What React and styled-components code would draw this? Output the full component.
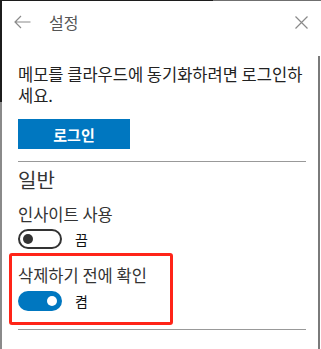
import React, { useState } from "react";
import styled, { createGlobalStyle } from "styled-components";

const GlobalStyle = createGlobalStyle`
  body {
    margin: 0;
    font-family: "Noto Sans CJK KR", "Noto Sans", sans-serif;
  }
`;

const Page = styled.div`
  width: 321px;
  height: 349px;
  overflow: hidden;
  box-sizing: border-box;
  background:
    linear-gradient(to right, #1c1c1c 213px, #6f6f6f 213px) top left / 100% 1px no-repeat,
    linear-gradient(#1c1c1c 102px, #8a8a8a 102px) top left / 2px 100% no-repeat,
    linear-gradient(transparent 56px, #7a7a7a 56px) 318px 0 / 2px 100% no-repeat,
    #ffffff;
`;

const Header = styled.div`
  height: 44px;
  display: flex;
  align-items: center;
  padding: 0 13px 0 14px;
`;

const IconButton = styled.button`
  border: none;
  background: none;
  padding: 0;
  display: flex;
  align-items: center;
  color: #8a8a8a;
  cursor: pointer;
`;

const Title = styled.h1`
  flex: 1;
  margin: 0 0 0 18px;
  font-size: 16px;
  font-weight: 400;
  color: #555;
`;

const Content = styled.div`
  padding: 0 15px 0 18px;
`;

const Message = styled.p`
  margin: 20px 0 0;
  font-size: 16.5px;
  line-height: 21px;
  color: #222;
`;

const LoginButton = styled.button`
  margin-top: 13px;
  width: 112px;
  height: 30px;
  border: none;
  background: #0077c0;
  color: #fff;
  font-family: inherit;
  font-size: 15px;
  font-weight: 700;
  display: block;
`;

const Divider = styled.hr`
  margin: ${(p) => p.$top}px 0 0;
  border: none;
  border-top: 1px solid #999;
`;

const SectionTitle = styled.h2`
  margin: 5px 0 0;
  font-size: 20px;
  line-height: 26px;
  font-weight: 400;
  color: #333;
`;

const Setting = styled.div`
  margin-top: ${(p) => p.$top}px;
`;

const SettingLabel = styled.div`
  font-size: 16.5px;
  line-height: 20px;
  color: #333;
`;

const ToggleRow = styled.div`
  display: flex;
  align-items: center;
  gap: 13px;
  margin-top: ${(p) => p.$top}px;
`;

const Track = styled.button`
  width: 44px;
  height: 20px;
  box-sizing: border-box;
  border-radius: 10px;
  border: ${(p) => (p.$on ? "none" : "2px solid #333")};
  background: ${(p) => (p.$on ? "#0077c0" : "#fff")};
  display: flex;
  align-items: center;
  justify-content: ${(p) => (p.$on ? "flex-end" : "flex-start")};
  padding: 0 ${(p) => (p.$on ? 5 : 3)}px;
  cursor: pointer;
`;

const Knob = styled.span`
  width: 10px;
  height: 10px;
  border-radius: 50%;
  background: ${(p) => (p.$on ? "#fff" : "#333")};
`;

const StateText = styled.span`
  font-size: 14px;
  color: #111;
`;

const Highlight = styled.div`
  margin: 4px 0 0 -9px;
  width: 164px;
  box-sizing: border-box;
  border: 3px solid #ff2418;
  border-radius: 3px;
  padding: 9px 0 11px 6px;
`;

const Toggle = ({ on, onChange }) => (
  <ToggleRow $top={on ? 6 : 5}>
    <Track $on={on} onClick={onChange}>
      <Knob $on={on} />
    </Track>
    <StateText>{on ? "켬" : "끔"}</StateText>
  </ToggleRow>
);

const App = () => {
  const [insights, setInsights] = useState(false);
  const [confirmDelete, setConfirmDelete] = useState(true);

  return (
    <Page>
      <GlobalStyle />
      <Header>
        <IconButton aria-label="뒤로">
          <svg width="17" height="14" viewBox="0 0 17 14" fill="none" stroke="currentColor" strokeWidth="1.2">
            <path d="M16.5 7H1M7 1L1 7l6 6" />
          </svg>
        </IconButton>
        <Title>설정</Title>
        <IconButton aria-label="닫기">
          <svg width="13" height="13" viewBox="0 0 13 13" fill="none" stroke="currentColor" strokeWidth="1.2">
            <path d="M0.5 0.5l12 12M12.5 0.5l-12 12" />
          </svg>
        </IconButton>
      </Header>
      <Content>
        <Message>메모를 클라우드에 동기화하려면 로그인하세요.</Message>
        <LoginButton>로그인</LoginButton>
        <Divider $top={12} />
        <SectionTitle>일반</SectionTitle>
        <Setting $top={11}>
          <SettingLabel>인사이트 사용</SettingLabel>
          <Toggle on={insights} onChange={() => setInsights(!insights)} />
        </Setting>
        <Highlight>
          <SettingLabel>삭제하기 전에 확인</SettingLabel>
          <Toggle on={confirmDelete} onChange={() => setConfirmDelete(!confirmDelete)} />
        </Highlight>
        <Divider $top={4} />
      </Content>
    </Page>
  );
};

export default App;
